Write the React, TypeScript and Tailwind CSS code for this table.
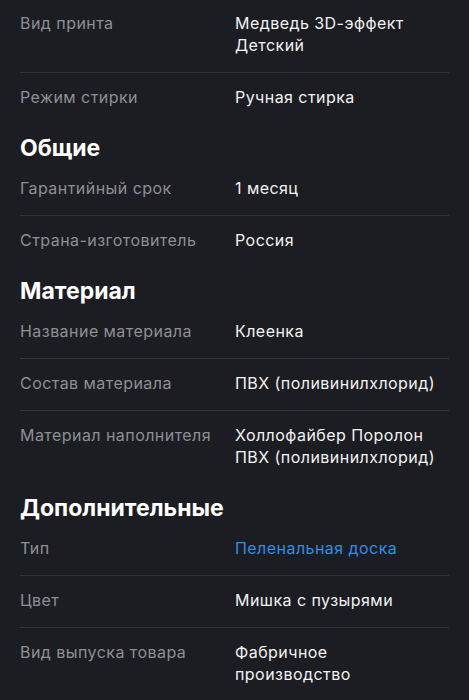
import React from "react";

type Row = { label: string; value: string; link?: boolean };
type Section = { title?: string; rows: Row[] };

const sections: Section[] = [
  {
    rows: [
      { label: "Вид принта", value: "Медведь 3D-эффект\nДетский" },
      { label: "Режим стирки", value: "Ручная стирка" },
    ],
  },
  {
    title: "Общие",
    rows: [
      { label: "Гарантийный срок", value: "1 месяц" },
      { label: "Страна-изготовитель", value: "Россия" },
    ],
  },
  {
    title: "Материал",
    rows: [
      { label: "Название материала", value: "Клеенка" },
      { label: "Состав материала", value: "ПВХ (поливинилхлорид)" },
      { label: "Материал наполнителя", value: "Холлофайбер Поролон\nПВХ (поливинилхлорид)" },
    ],
  },
  {
    title: "Дополнительные",
    rows: [
      { label: "Тип", value: "Пеленальная доска", link: true },
      { label: "Цвет", value: "Мишка с пузырями" },
      { label: "Вид выпуска товара", value: "Фабричное\nпроизводство" },
    ],
  },
];

export default function App() {
  return (
    <div
      className="min-h-[700px] w-[469px] bg-[#1c1d22] px-5 antialiased"
      style={{ fontFamily: "Inter, 'Noto Sans', sans-serif" }}
    >
      {sections.map((s, si) => (
        <div key={si} className={s.title ? "mt-[10px]" : "-mt-px"}>
          {s.title && (
            <h2 className="mb-[2px] text-[23px] font-bold leading-[28px] text-white tracking-[0px]">
              {s.title}
            </h2>
          )}
          {s.rows.map((r, ri) => (
            <div
              key={ri}
              className={
                "grid grid-cols-[215px_1fr] pt-[13px] pb-4 text-[16px] leading-[22px] tracking-[0.45px] " +
                (ri < s.rows.length - 1 ? "border-b border-[#35363b]" : "")
              }
            >
              <div className="text-[#8e8f94]">{r.label}</div>
              <div className={"whitespace-pre-line " + (r.link ? "text-[#2f8de4]" : "text-[#f2f2f3]")}>
                {r.value}
              </div>
            </div>
          ))}
        </div>
      ))}
    </div>
  );
}
